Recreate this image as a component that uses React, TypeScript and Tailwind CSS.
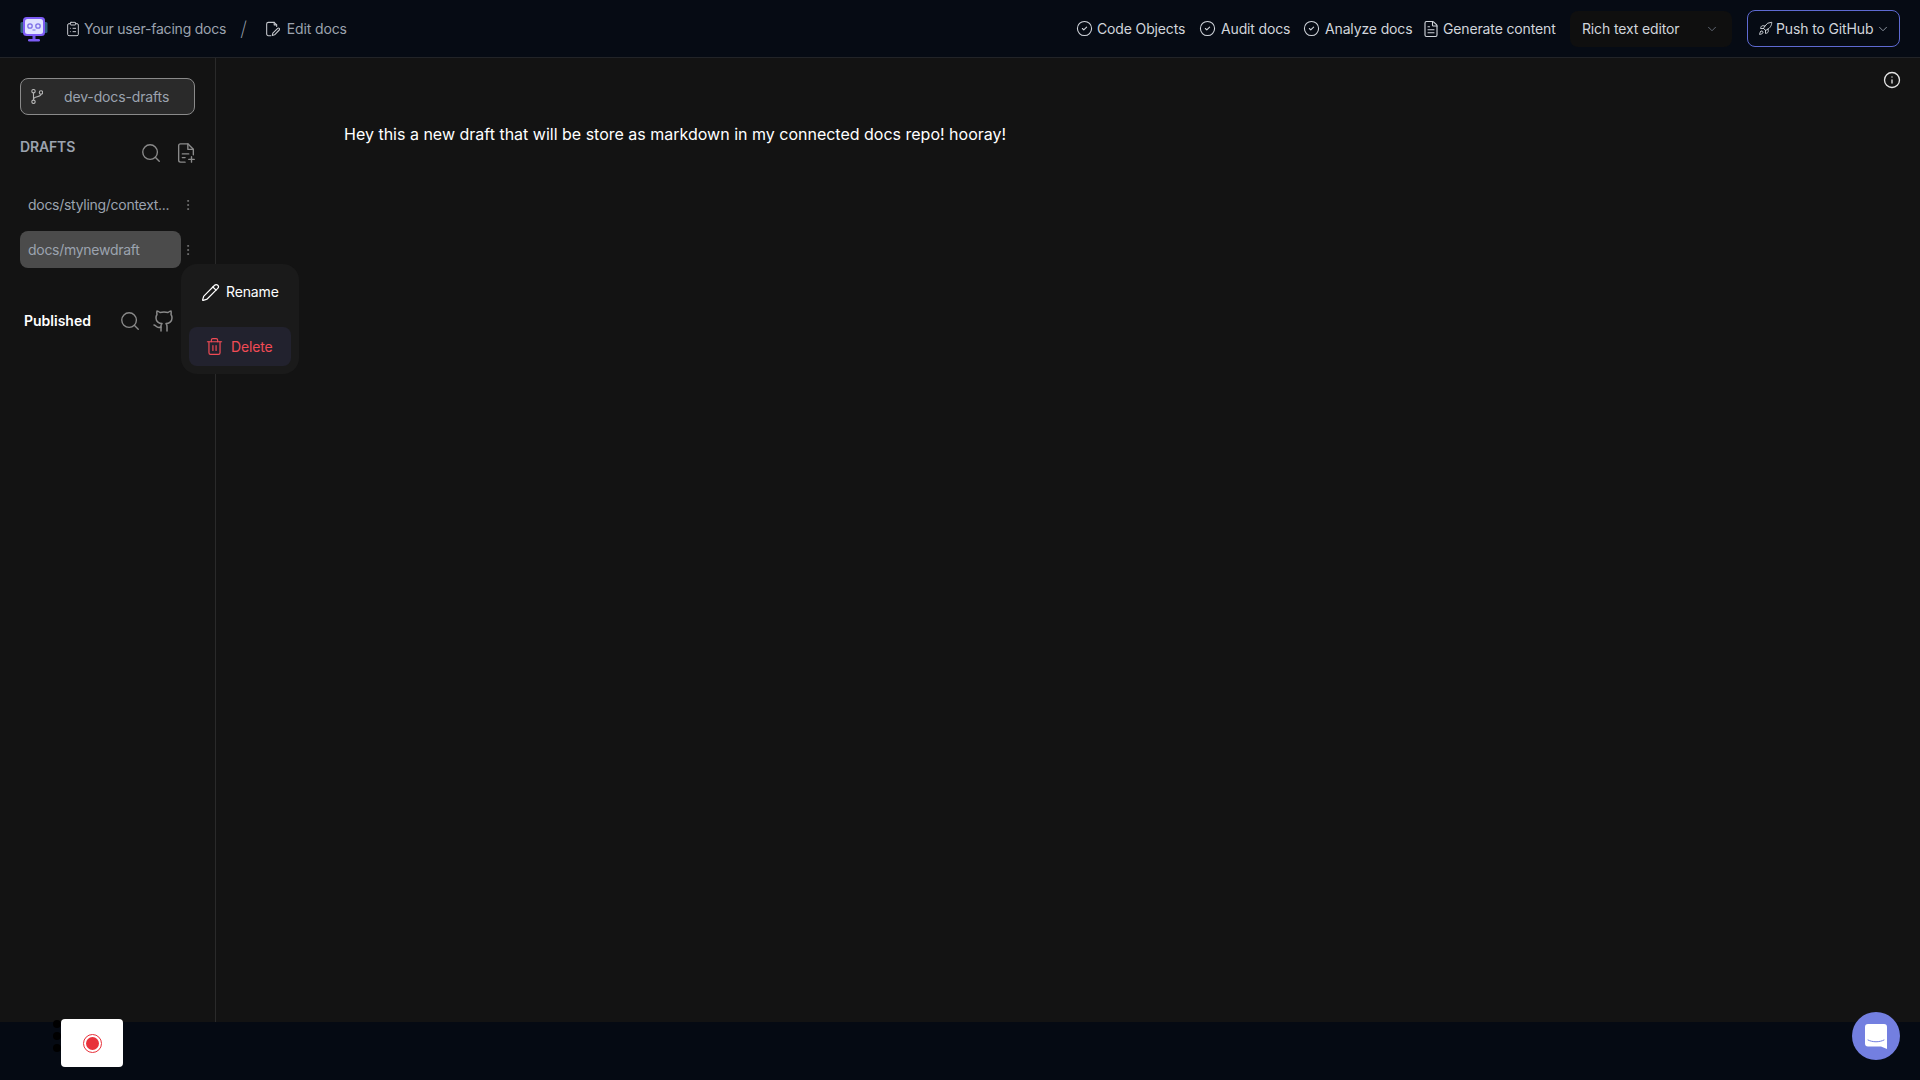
import React from 'react';
import {
  ChevronDown,
  CircleCheck,
  ClipboardList,
  EllipsisVertical,
  FileText,
  Github,
  Info,
  Pencil,
  Rocket,
  Search,
  Trash2,
} from 'lucide-react';

const Logo = () => (
  <svg width="28" height="28" viewBox="0 0 28 28" fill="none">
    <rect x="0.5" y="7" width="4" height="11" rx="1.5" fill="#2f5d7c" />
    <rect x="23.5" y="7" width="4" height="11" rx="1.5" fill="#2f5d7c" />
    <rect x="3" y="2" width="22" height="19" rx="3.5" fill="#7c5cf5" />
    <rect x="5" y="4" width="18" height="15" rx="2.5" fill="#dfe3ff" />
    <circle cx="10" cy="11" r="2.2" fill="none" stroke="#7c70e8" strokeWidth="1.3" />
    <circle cx="18" cy="11" r="2.2" fill="none" stroke="#7c70e8" strokeWidth="1.3" />
    <rect x="12.5" y="14.5" width="3" height="1" fill="#7c70e8" />
    <rect x="12.5" y="21" width="3" height="3" fill="#6d55e8" />
    <rect x="8" y="24" width="12" height="2.5" rx="1.2" fill="#7c5cf5" />
  </svg>
);

const BranchIcon = () => (
  <svg width="12" height="15" viewBox="0 0 12 15" fill="none" stroke="#b5b5b5" strokeWidth="1.1">
    <circle cx="2.500" cy="2.200" r="1.700" />
    <circle cx="2.500" cy="12.800" r="1.700" />
    <circle cx="10" cy="3.500" r="1.700" />
    <path d="M2.500 3.900v7.200" />
    <path d="M10 5.200c0 3.300-7.500 1.800-7.500 5" />
  </svg>
);

const NewFileIcon = () => (
  <svg
    width="22"
    height="22"
    viewBox="0 0 24 24"
    fill="none"
    stroke="#8a8a8a"
    strokeWidth="1.5"
    strokeLinecap="round"
    strokeLinejoin="round"
  >
    <path d="M11 22H6a2 2 0 0 1-2-2V4a2 2 0 0 1 2-2h8l6 6v6" />
    <path d="M14 2v6h6" />
    <path d="M8 13h7" />
    <path d="M8 17h3" />
    <path d="M18 16v6" />
    <path d="M15 19h6" />
  </svg>
);

const EditDocIcon = () => (
  <svg
    width="15"
    height="16"
    viewBox="0 0 18 18"
    fill="none"
    stroke="#c4c7cc"
    strokeWidth="1.300"
    strokeLinecap="round"
    strokeLinejoin="round"
    className="ml-[18px]"
  >
    <path d="M7 17H4a2 2 0 0 1-2-2V3a2 2 0 0 1 2-2h7l3 3v2" />
    <path d="M11 1v3h3" />
    <path d="M15.200 8.300a1.300 1.300 0 0 1 1.900 1.900L11.500 16l-2.800.7.700-2.800z" />
  </svg>
);

const headerActions = [
  { label: 'Code Objects', gap: 'gap-1', width: 'w-[123px]' },
  { label: 'Audit docs', gap: 'gap-[5px]', width: 'w-[104px]' },
  { label: 'Analyze docs', gap: 'gap-[5px]', width: 'w-[120px]' },
];

export default function App() {
  return (
    <div className="relative flex h-[1080px] w-[1920px] flex-col overflow-hidden bg-[#131313] font-['Inter',sans-serif] text-sm tracking-[-0.01em]">
      <header className="flex h-[58px] shrink-0 items-center border-b border-[#222428] bg-[#060b14] pl-5 pr-5">
        <Logo />
        <ClipboardList size={16} strokeWidth={1.5} className="ml-[17px] text-[#c4c7cc]" />
        <span className="ml-[3px] tracking-[-0.015em] text-[#9ca3af]">Your user-facing docs</span>
        <span className="ml-[14px] text-xl font-extralight text-[#9ca3af]">/</span>
        <EditDocIcon />
        <span className="ml-[7px] text-[#9ca3af]">Edit docs</span>

        <div className="ml-auto flex items-center">
          {headerActions.map((action) => (
            <div key={action.label} className={`flex items-center ${action.gap} ${action.width} text-[#d1d5db]`}>
              <CircleCheck size={17} strokeWidth={1.5} className="ml-[1px] shrink-0" />
              <span>{action.label}</span>
            </div>
          ))}
          <div className="flex w-[148px] items-center gap-[3px] text-[#d1d5db]">
            <FileText size={18} strokeWidth={1.5} className="shrink-0" />
            <span>Generate content</span>
          </div>
          <div className="flex h-9 w-[162px] items-center justify-between rounded-lg bg-[#0f0f0f] pl-3 pr-[13px] text-[#d1d5db]">
            <span>Rich text editor</span>
            <ChevronDown size={14} strokeWidth={1.5} className="text-[#6b7280]" />
          </div>
          <div className="ml-[15px] flex h-[37px] w-[153px] items-center rounded-lg border border-[#5e6ad2] pl-[10px] text-[#d1d5db]">
            <Rocket size={15} strokeWidth={1.5} />
            <span className="ml-[3px]">Push to GitHub</span>
            <ChevronDown size={14} strokeWidth={1.5} className="ml-[3px] text-[#9ca3af]" />
          </div>
        </div>
      </header>

      <div className="flex min-h-0 flex-1">
        <aside className="relative w-[216px] shrink-0 border-r border-[#2a2a2a] pl-5 pt-5">
          <div className="flex h-[37px] w-[175px] items-center rounded-lg border border-[#8a8a8a] bg-[#2a2a2a] pl-[10px] text-[#9ca3af]">
            <BranchIcon />
            <span className="ml-[21px]">dev-docs-drafts</span>
          </div>

          <div className="mt-[22px] flex h-[26px] w-[177px] items-start">
            <span className="font-semibold text-[#9ca3af]">DRAFTS</span>
            <Search size={22} strokeWidth={1.5} className="ml-auto mt-[5px] text-[#8a8a8a]" />
            <div className="ml-[13px] mt-[5px]">
              <NewFileIcon />
            </div>
          </div>

          <div className="mt-[23px] flex h-[37px] w-[175px] items-center pl-2 text-[#9ca3af]">
            <span className="w-[145px] tracking-[-0.02em]">docs/styling/context...</span>
            <EllipsisVertical size={14} strokeWidth={1.5} className="ml-auto text-[#7a7a7a]" />
          </div>
          <div className="mt-2 flex h-[37px] w-[175px] items-center">
            <div className="flex h-full w-[161px] items-center rounded-lg bg-[#4b4b4b] pl-2 tracking-[-0.02em] text-[#9ca3af]">
              docs/mynewdraft
            </div>
            <EllipsisVertical size={14} strokeWidth={1.5} className="ml-auto text-[#7a7a7a]" />
          </div>

          <div className="ml-1 mt-10 flex h-[26px] items-center">
            <span className="font-semibold tracking-normal text-white">Published</span>
            <Search size={22} strokeWidth={1.5} className="ml-[28px] text-[#8a8a8a]" />
            <Github size={24} strokeWidth={1.5} className="ml-[11px] text-[#8a8a8a]" />
          </div>

          {/* row menu for docs/mynewdraft */}
          <div className="absolute left-[181px] top-[206px] z-10 flex h-[110px] w-[118px] flex-col rounded-2xl bg-[#1a1a1a] px-2 pt-2">
            <div className="flex h-[40px] items-center pl-3 text-white">
              <Pencil size={19} strokeWidth={1.5} />
              <span className="ml-[6px]">Rename</span>
            </div>
            <div className="mt-[15px] flex h-[39px] items-center rounded-lg bg-[#22222e] pl-4 text-[#f14b55]">
              <Trash2 size={19} strokeWidth={1.5} />
              <span className="ml-[7px]">Delete</span>
            </div>
          </div>
        </aside>

        <main className="relative flex-1 pl-[128px] pt-[65px]">
          <p className="text-base leading-[22px] tracking-normal text-white">
            Hey this a new draft that will be store as markdown in my connected docs repo! hooray!
          </p>
          <Info size={18} strokeWidth={1.75} className="absolute right-[19px] top-[13px] text-[#e5e5e5]" />
        </main>
      </div>

      <footer className="h-[58px] shrink-0 bg-[#050a13]" />

      {/* recorder widget */}
      <div className="absolute left-[53px] top-[1020px] flex flex-col gap-1">
        <span className="h-2 w-2 rounded-full bg-black" />
        <span className="h-2 w-2 rounded-full bg-black" />
        <span className="h-2 w-2 rounded-full bg-black" />
      </div>
      <div className="absolute left-[61px] top-[1019px] flex h-12 w-[62px] items-center justify-center rounded-[4px] bg-white">
        <div className="flex h-[19px] w-[19px] items-center justify-center rounded-full border border-[#e8313a]">
          <div className="h-[13px] w-[13px] rounded-full bg-[#e8313a]" />
        </div>
      </div>

      {/* chat launcher */}
      <div className="absolute left-[1852px] top-[1012px] flex h-12 w-12 items-center justify-center rounded-full bg-[#737fe0]">
        <svg width="22" height="25" viewBox="0 0 22 25">
          <path d="M3 0h16a3 3 0 0 1 3 3v22l-6-2.500H3a3 3 0 0 1-3-3V3a3 3 0 0 1 3-3z" fill="#ffffff" />
          <path d="M3 16c4.500 2.400 11.500 2.400 16 0" fill="none" stroke="#737fe0" strokeWidth="1" strokeLinecap="round" />
        </svg>
      </div>
    </div>
  );
}
